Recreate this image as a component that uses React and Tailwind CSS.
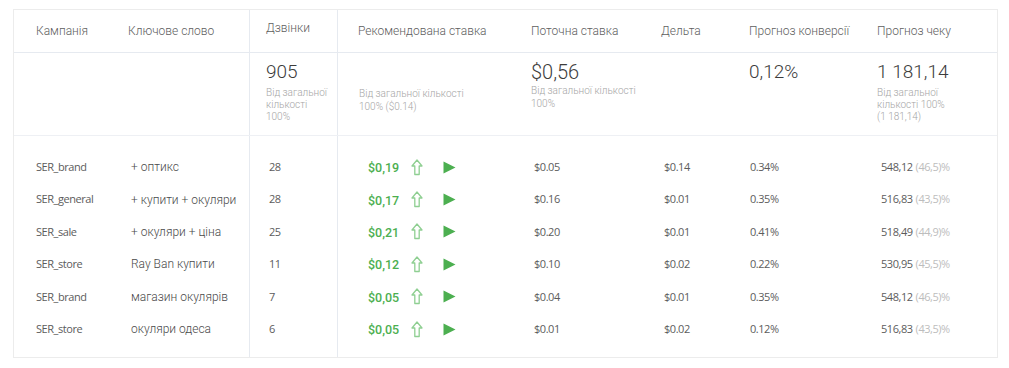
import React from 'react';

const rows = [
  { campaign: 'SER_brand', keyword: '+ оптикс', calls: '28', rec: '$0,19', cur: '$0.05', delta: '$0.14', conv: '0.34%', check: '548,12', share: '(46,5)%' },
  { campaign: 'SER_general', keyword: '+ купити + окуляри', calls: '28', rec: '$0,17', cur: '$0.16', delta: '$0.01', conv: '0.35%', check: '516,83', share: '(43,5)%' },
  { campaign: 'SER_sale', keyword: '+ окуляри + ціна', calls: '25', rec: '$0,21', cur: '$0.20', delta: '$0.01', conv: '0.41%', check: '518,49', share: '(44,9)%' },
  { campaign: 'SER_store', keyword: 'Ray Ban купити', calls: '11', rec: '$0,12', cur: '$0.10', delta: '$0.02', conv: '0.22%', check: '530,95', share: '(45,5)%' },
  { campaign: 'SER_brand', keyword: 'магазин окулярів', calls: '7', rec: '$0,05', cur: '$0.04', delta: '$0.01', conv: '0.35%', check: '548,12', share: '(46,5)%' },
  { campaign: 'SER_store', keyword: 'окуляри одеса', calls: '6', rec: '$0,05', cur: '$0.01', delta: '$0.02', conv: '0.12%', check: '516,83', share: '(43,5)%' },
];

// column template shared by every band of the table
const cols = 'grid grid-cols-[92px_143px_88px_174px_130px_88px_128px_140px]';
const cell = "h-[32.4px] flex items-center font-['Open_Sans',sans-serif] text-[11px] tracking-[-0.45px] text-[#5c5c5c]";

const UpArrow = () => (
  <svg width="12" height="17" viewBox="0 0 12 17" className="shrink-0">
    <path
      d="M6 1 L11 7 L8.2 7 L8.2 15.5 L3.8 15.5 L3.8 7 L1 7 Z"
      fill="none"
      stroke="#8fcf92"
      strokeWidth="1.3"
      strokeLinejoin="round"
    />
  </svg>
);

const Play = () => (
  <svg width="13" height="13" viewBox="0 0 13 13" className="shrink-0">
    <path d="M0.5 0.5 L12.5 6.5 L0.5 12.5 Z" fill="#4caf50" />
  </svg>
);

const Sub = ({ children, className = '' }) => (
  <div className={`text-[10px] leading-[12px] font-light text-[#a5a5a5] ${className}`}>{children}</div>
);

const App = () => {
  return (
    <div className="w-[1009px] h-[368px] bg-white pt-[9px] pl-[13px] font-['Roboto',sans-serif]">
      <div className="w-[985px] border border-[#ececec] bg-white">
        {/* Header */}
        <div className={`${cols} h-[43px] items-center text-[12px] font-light text-[#5e5e5e] border-b border-[#e6eaf0]`}>
          <div className="pl-[22px]">Кампанія</div>
          <div className="pl-[22px]">Ключове слово</div>
          <div className="pl-[16px] h-full flex items-center border-l border-[#e6eaf0] pb-[6px]">Дзвінки</div>
          <div className="pl-[20px] h-full flex items-center border-l border-[#e6eaf0]">Рекомендована ставка</div>
          <div className="pl-[20px]">Поточна ставка</div>
          <div className="pl-[20px]">Дельта</div>
          <div className="pl-[20px]">Прогноз конверсії</div>
          <div className="pl-[20px]">Прогноз чеку</div>
        </div>

        {/* Summary */}
        <div className={`${cols} h-[83px] border-b border-[#eef0f4]`}>
          <div />
          <div />
          <div className="pl-[16px] pt-[8px] border-l border-[#e6eaf0]">
            <div className="text-[19px] leading-[22px] font-light text-[#3c3c3c]">905</div>
            <Sub className="mt-[4px]">Від загальної<br />кількості<br />100%</Sub>
          </div>
          <div className="pl-[21px] pt-[34px] border-l border-[#e6eaf0]">
            <Sub className="leading-[13px]">Від загальної кількості<br />100% ($0.14)</Sub>
          </div>
          <div className="pl-[20px] pt-[8px]">
            <div className="text-[20px] leading-[22px] font-light text-[#3c3c3c]">$0,56</div>
            <Sub className="leading-[13px] mt-[1px]">Від загальної кількості<br />100%</Sub>
          </div>
          <div />
          <div className="pl-[20px] pt-[8px]">
            <div className="text-[19px] leading-[22px] font-light text-[#3c3c3c]">0,12%</div>
          </div>
          <div className="pl-[20px] pt-[8px]">
            <div className="text-[19px] leading-[22px] font-light text-[#3c3c3c]">1 181,14</div>
            <Sub className="mt-[4px]">Від загальної<br />кількості 100%<br />(1 181,14)</Sub>
          </div>
        </div>

        {/* Body */}
        <div className={`${cols} h-[221px]`}>
          <div className="pl-[22px] pt-[15px]">
            {rows.map((r, i) => (
              <div key={i} className={cell}>{r.campaign}</div>
            ))}
          </div>
          <div className="pl-[25px] pt-[15px]">
            {rows.map((r, i) => (
              <div key={i} className="h-[32.4px] flex items-center text-[12px] font-light text-[#4a4a4a]">
                {r.keyword}
              </div>
            ))}
          </div>
          <div className="pl-[19px] pt-[15px] border-l border-[#e6eaf0]">
            {rows.map((r, i) => (
              <div key={i} className={cell}>{r.calls}</div>
            ))}
          </div>
          <div className="pl-[30px] pt-[15px] border-l border-[#e6eaf0]">
            {rows.map((r, i) => (
              <div key={i} className="h-[32.4px] flex items-center">
                <span className="w-[43px] text-[12.5px] font-medium text-[#4caf50] pt-[3px]">{r.rec}</span>
                <UpArrow />
                <span className="ml-[20px]"><Play /></span>
              </div>
            ))}
          </div>
          <div className="pl-[23px] pt-[15px]">
            {rows.map((r, i) => (
              <div key={i} className={cell}>{r.cur}</div>
            ))}
          </div>
          <div className="pl-[23px] pt-[15px]">
            {rows.map((r, i) => (
              <div key={i} className={cell}>{r.delta}</div>
            ))}
          </div>
          <div className="pl-[21px] pt-[15px]">
            {rows.map((r, i) => (
              <div key={i} className={cell}>{r.conv}</div>
            ))}
          </div>
          <div className="pl-[24px] pt-[15px]">
            {rows.map((r, i) => (
              <div key={i} className={cell}>
                {r.check}
                <span className="ml-[3px] text-[#bdbdbd]">{r.share}</span>
              </div>
            ))}
          </div>
        </div>
      </div>
    </div>
  );
};

export default App;
